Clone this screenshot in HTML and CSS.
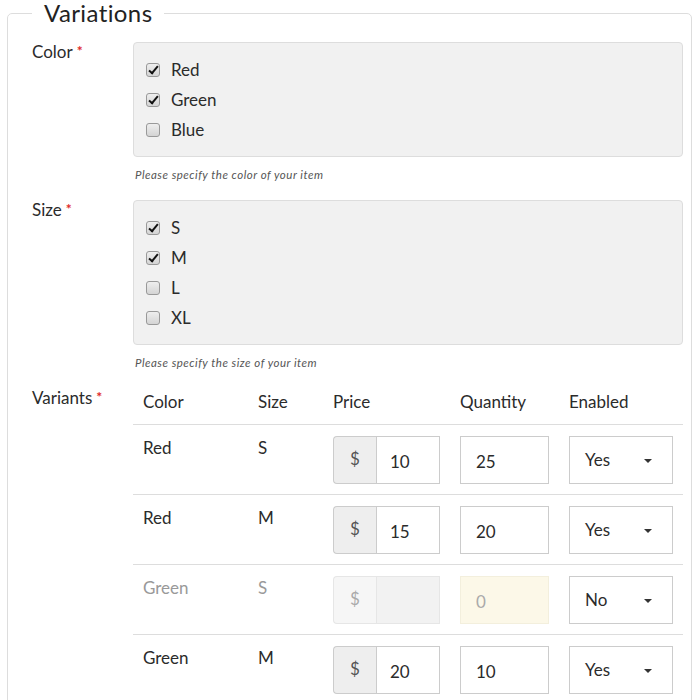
FILE: index.html
```html
<!DOCTYPE html>
<html lang="en">
<head>
  <meta charset="UTF-8" />
  <title>Variations</title>
  <link rel="stylesheet" href="styles.css">
</head>
<body>

<fieldset class="variations">
  <legend>Variations</legend>

  <div class="form-group">
    <label class="group-label">Color<span class="req">*</span></label>
    <div class="group-body">
      <div class="check-box">
        <label class="check-row"><input type="checkbox" checked /> Red</label>
        <label class="check-row"><input type="checkbox" checked /> Green</label>
        <label class="check-row"><input type="checkbox" /> Blue</label>
      </div>
      <p class="help">Please specify the color of your item</p>
    </div>
  </div>

  <div class="form-group">
    <label class="group-label">Size<span class="req">*</span></label>
    <div class="group-body">
      <div class="check-box">
        <label class="check-row"><input type="checkbox" checked /> S</label>
        <label class="check-row"><input type="checkbox" checked /> M</label>
        <label class="check-row"><input type="checkbox" /> L</label>
        <label class="check-row"><input type="checkbox" /> XL</label>
      </div>
      <p class="help">Please specify the size of your item</p>
    </div>
  </div>

  <div class="form-group">
    <label class="group-label">Variants<span class="req">*</span></label>
    <div class="group-body">
      <table class="variants">
        <colgroup>
          <col class="col-color" />
          <col class="col-size" />
          <col class="col-price" />
          <col class="col-qty" />
          <col class="col-enabled" />
        </colgroup>
        <thead>
          <tr>
            <th>Color</th>
            <th>Size</th>
            <th>Price</th>
            <th>Quantity</th>
            <th>Enabled</th>
          </tr>
        </thead>
        <tbody>
          <tr>
            <td>Red</td>
            <td>S</td>
            <td>
              <div class="price-group">
                <span class="addon">$</span>
                <input type="text" class="price-input" value="10" />
              </div>
            </td>
            <td><input type="text" class="qty-input" value="25" /></td>
            <td><div class="select">Yes<span class="caret"></span></div></td>
          </tr>
          <tr>
            <td>Red</td>
            <td>M</td>
            <td>
              <div class="price-group">
                <span class="addon">$</span>
                <input type="text" class="price-input" value="15" />
              </div>
            </td>
            <td><input type="text" class="qty-input" value="20" /></td>
            <td><div class="select">Yes<span class="caret"></span></div></td>
          </tr>
          <tr class="off">
            <td>Green</td>
            <td>S</td>
            <td>
              <div class="price-group">
                <span class="addon">$</span>
                <input type="text" class="price-input" value="" />
              </div>
            </td>
            <td><input type="text" class="qty-input" value="0" /></td>
            <td><div class="select">No<span class="caret"></span></div></td>
          </tr>
          <tr>
            <td>Green</td>
            <td>M</td>
            <td>
              <div class="price-group">
                <span class="addon">$</span>
                <input type="text" class="price-input" value="20" />
              </div>
            </td>
            <td><input type="text" class="qty-input" value="10" /></td>
            <td><div class="select">Yes<span class="caret"></span></div></td>
          </tr>
        </tbody>
      </table>
    </div>
  </div>
</fieldset>

</body>
</html>
```

FILE: styles.css
```css
body {
  font-family: Lato, "Open Sans", sans-serif;
  margin: 0;
  background: #fff;
  color: #2b2b2b;
  font-size: 17px;
}

.variations {
  margin: 0 8px 0 7px;
  padding: 16px 8px 0 24px;
  border: 1px solid #ddd;
  border-radius: 5px;
  min-height: 720px;
}

.variations legend {
  font-size: 24px;
  line-height: 26px;
  letter-spacing: 0.4px;
  padding: 0 12px;
  color: #222;
}

.form-group {
  display: grid;
  grid-template-columns: 101px 1fr;
  margin-bottom: 18px;
}

.group-label {
  line-height: 22px;
  margin-top: -1px;
}

.req {
  color: #e02828;
  font-size: 14px;
  font-weight: bold;
  vertical-align: top;
  line-height: 19px;
  margin-left: 4px;
}

.check-box {
  background: #f1f1f1;
  border: 1px solid #ddd;
  border-radius: 4px;
  padding: 12px 12px 11px;
}

.check-row {
  display: flex;
  align-items: center;
  gap: 11px;
  height: 30px;
  line-height: 30px;
}

.check-row input {
  appearance: none;
  -webkit-appearance: none;
  width: 14px;
  height: 14px;
  margin: 0;
  border: 1px solid #999;
  border-radius: 3px;
  background: linear-gradient(#eee, #d4d4d4);
  position: relative;
}

.check-row input:checked::after {
  content: "";
  position: absolute;
  left: 4px;
  top: 0px;
  width: 3px;
  height: 8px;
  border-right: 2.5px solid #111;
  border-bottom: 2.5px solid #111;
  transform: rotate(40deg);
}

.help {
  margin: 11px 0 0 2px;
  font-size: 11.5px;
  line-height: 14px;
  letter-spacing: 0.5px;
  font-style: italic;
  color: #555;
}

.variants {
  width: 100%;
  table-layout: fixed;
  border-collapse: collapse;
}

.col-color { width: 115px; }
.col-size { width: 75px; }
.col-price { width: 127px; }
.col-qty { width: 109px; }
.col-enabled { width: 124px; }

.variants th {
  font-weight: normal;
  text-align: left;
  line-height: 22px;
  padding: 3px 10px 11px;
  border-bottom: 1px solid #ddd;
}

.variants td {
  vertical-align: top;
  line-height: 22px;
  padding: 11px 10px 10px;
  border-top: 1px solid #ddd;
}

.variants td:nth-child(-n+2) {
  padding-top: 12px;
  padding-bottom: 9px;
}

.variants tbody tr:first-child td {
  border-top: none;
}

.price-group {
  display: flex;
  height: 48px;
}

.addon {
  width: 43px;
  box-sizing: border-box;
  background: #eee;
  border: 1px solid #ccc;
  border-right: none;
  border-radius: 4px 0 0 4px;
  color: #555;
  display: flex;
  align-items: center;
  justify-content: center;
  padding-bottom: 2px;
}

.price-input,
.qty-input {
  font-family: inherit;
  font-size: 17px;
  color: #2b2b2b;
  box-sizing: border-box;
  height: 48px;
  margin: 0;
  border: 1px solid #ccc;
  border-radius: 0;
  background: #fff;
  outline: none;
}

.price-input {
  flex: 1;
  width: 0;
  padding: 2px 13px 0;
}

.qty-input {
  width: 100%;
  padding: 2px 15px 0;
}

.select {
  height: 48px;
  box-sizing: border-box;
  border: 1px solid #ccc;
  display: flex;
  align-items: center;
  justify-content: space-between;
  padding: 0 20px 0 15px;
}

.caret {
  width: 0;
  height: 0;
  border-left: 4px solid transparent;
  border-right: 4px solid transparent;
  border-top: 4px solid #333;
  margin-top: 2px;
}

.off td {
  color: #999;
}

.off .addon {
  background: #f6f6f6;
  border-color: #e6e6e6;
  color: #aaa;
}

.off .price-input {
  background: #f2f2f2;
  border-color: #e6e6e6;
}

.off .qty-input {
  background: #fcf8e8;
  border-color: #f3efdd;
  color: #aaa;
}

.off .select {
  color: #2b2b2b;
}
```
